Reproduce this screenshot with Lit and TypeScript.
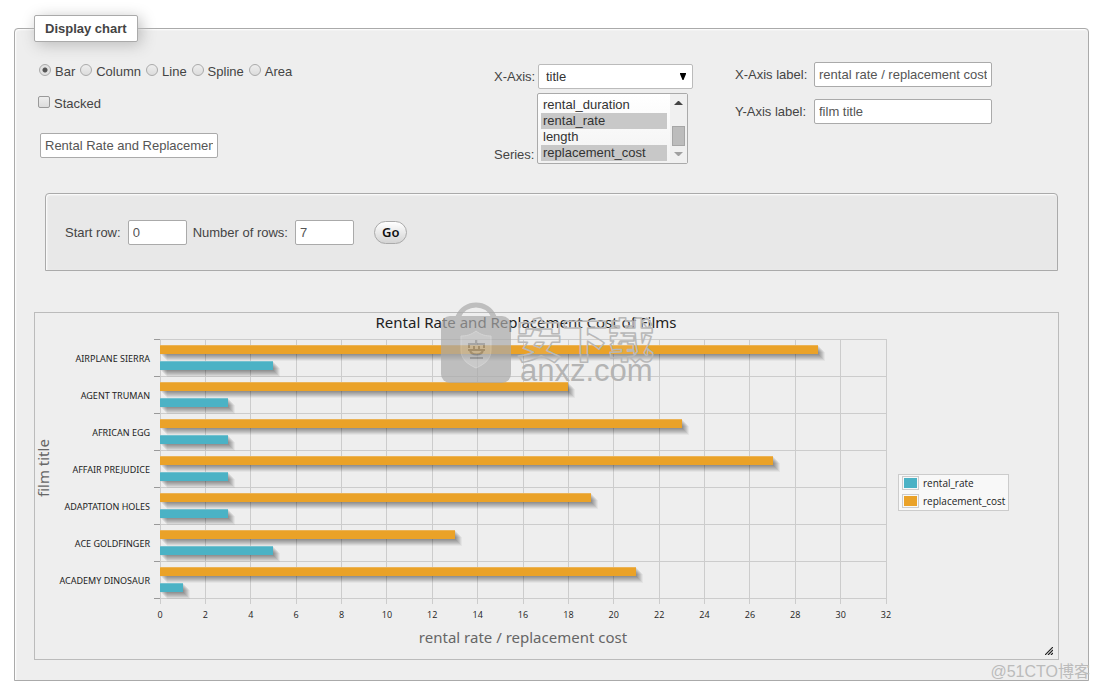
import { LitElement, html, svg, css } from "lit";
import { customElement, property } from "lit/decorators.js";
import { styleMap } from "lit/directives/style-map.js";

interface Film {
  title: string;
  rate: number;
  cost: number;
}

const FILMS: Film[] = [
  { title: "AIRPLANE SIERRA", rate: 5, cost: 29 },
  { title: "AGENT TRUMAN", rate: 3, cost: 18 },
  { title: "AFRICAN EGG", rate: 3, cost: 23 },
  { title: "AFFAIR PREJUDICE", rate: 3, cost: 27 },
  { title: "ADAPTATION HOLES", rate: 3, cost: 19 },
  { title: "ACE GOLDFINGER", rate: 5, cost: 13 },
  { title: "ACADEMY DINOSAUR", rate: 1, cost: 21 },
];
const MAX = 32;
const TICKS = Array.from({ length: MAX / 2 + 1 }, (_, i) => i * 2);

@customElement("film-chart")
export class FilmChart extends LitElement {
  @property({ attribute: false }) films: Film[] = [];

  static styles = css`
    :host {
      display: grid;
      grid-template-columns: 16px 99px 1fr 172px;
      grid-template-rows: 26px auto auto;
      position: relative;
      box-sizing: border-box;
      border: 1px solid #bbb;
      font-family: "Noto Sans", "Open Sans", sans-serif;
      color: #222;
      padding-bottom: 12px;
    }
    .title {
      grid-column: 3;
      grid-row: 1;
      font-size: 15px;
      line-height: 18px;
      text-align: center;
      white-space: nowrap;
      padding-left: 16px;
    }
    .ylabel {
      grid-column: 1;
      grid-row: 2;
      writing-mode: vertical-rl;
      transform: rotate(180deg);
      text-align: center;
      font-size: 15px;
      line-height: 16px;
      color: #666;
    }
    .cats {
      grid-column: 2;
      grid-row: 2;
      display: grid;
      grid-auto-rows: 37px;
      font-size: 9px;
      line-height: 40px;
      text-align: right;
      white-space: nowrap;
    }
    .plot {
      grid-column: 3;
      grid-row: 2;
      position: relative;
      margin: 0 0 0 10px;
    }
    .lines {
      position: absolute;
      inset: 0;
      width: 100%;
      height: 100%;
      overflow: visible;
      shape-rendering: crispEdges;
    }
    .row {
      position: relative;
      box-sizing: border-box;
      height: 37px;
      padding-top: 6px;
      display: grid;
      grid-template-rows: 9px 9px;
      row-gap: 7px;
    }
    .bar {
      box-shadow: 1px 1px rgba(0, 0, 0, 0.07), 2px 2px rgba(0, 0, 0, 0.07), 3px 3px rgba(0, 0, 0, 0.07),
        4px 4px rgba(0, 0, 0, 0.07), 5px 5px rgba(0, 0, 0, 0.07), 6px 6px rgba(0, 0, 0, 0.06),
        7px 7px rgba(0, 0, 0, 0.04);
    }
    .cost {
      background: linear-gradient(#ebb356 1px, #eaa228 1px);
    }
    .rate {
      background: linear-gradient(#74c1cf 1px, #4bb2c5 1px);
    }
    .axis {
      grid-column: 3;
      grid-row: 3;
      padding-left: 10px;
    }
    .ticks {
      display: flex;
      justify-content: space-between;
      padding-top: 10px;
      font-family: "Open Sans", "Noto Sans", sans-serif;
      font-size: 9px;
      line-height: 14px;
    }
    .tick {
      width: 0;
      display: flex;
      justify-content: center;
    }
    .xlabel {
      margin-top: 5px;
      font-size: 15px;
      line-height: 20px;
      text-align: center;
      color: #666;
    }
    .legend {
      grid-column: 4;
      grid-row: 2;
      align-self: center;
      justify-self: start;
      box-sizing: border-box;
      margin: 48px 0 0 12px;
      border: 1px solid #ccc;
      background: rgba(255, 255, 255, 0.6);
      padding: 1px 3px 2px;
      display: grid;
      row-gap: 4px;
      font-family: "Open Sans", "Noto Sans", sans-serif;
      font-size: 10px;
      line-height: 14px;
    }
    .entry {
      display: flex;
      align-items: center;
      gap: 4px;
    }
    .swatch {
      box-sizing: border-box;
      width: 17px;
      height: 14px;
      border: 1px solid #ccc;
      padding: 1px;
      background-clip: content-box;
      background-color: var(--tone);
    }
    .teal {
      --tone: #4bb2c5;
    }
    .amber {
      --tone: #eaa228;
    }
    .grip {
      position: absolute;
      right: 5px;
      bottom: 4px;
    }
  `;

  render() {
    const n = this.films.length;
    return html`
      <div class="title">Rental Rate and Replacement Cost of Films</div>
      <div class="ylabel">film title</div>
      <div class="cats">${this.films.map((f) => html`<div>${f.title}</div>`)}</div>
      <div class="plot">
        <svg class="lines" aria-hidden="true">
          ${TICKS.map((t) => {
            const x = `${(t / MAX) * 100}%`;
            return svg`<line x1=${x} x2=${x} y1="0" y2="100%" stroke="#ccc"></line>
              <svg x=${x} y="100%" overflow="visible"><line y2="6" stroke="#ccc"></line></svg>`;
          })}
          ${Array.from({ length: n + 1 }, (_, i) => {
            const y = `${(i / n) * 100}%`;
            return svg`<line x1="0" x2="100%" y1=${y} y2=${y} stroke="#ccc"></line>
              <line x1="-6" x2="0" y1=${y} y2=${y} stroke="#999"></line>`;
          })}
        </svg>
        ${this.films.map(
          (f) => html`<div class="row">
            <div class="bar cost" style=${styleMap({ width: `${(f.cost / MAX) * 100}%` })}></div>
            <div class="bar rate" style=${styleMap({ width: `${(f.rate / MAX) * 100}%` })}></div>
          </div>`
        )}
      </div>
      <div class="axis">
        <div class="ticks">${TICKS.map((t) => html`<span class="tick">${t}</span>`)}</div>
        <div class="xlabel">rental rate / replacement cost</div>
      </div>
      <div class="legend">
        <div class="entry"><span class="swatch teal"></span>rental_rate</div>
        <div class="entry"><span class="swatch amber"></span>replacement_cost</div>
      </div>
      <svg class="grip" width="8" height="8" viewBox="0 0 8 8" aria-hidden="true">
        <path d="M0 8L8 0M3 8L8 3M6 8L8 6" stroke="#222" stroke-width="1.2" fill="none" />
      </svg>
    `;
  }
}

@customElement("app-root")
export class AppRoot extends LitElement {
  static styles = css`
    :host {
      display: block;
      position: relative;
      min-height: 100vh;
      box-sizing: border-box;
      padding: 15px 10px 9px 14px;
      background: #fff;
      font-family: "Liberation Sans", Arial, sans-serif;
      font-size: 13px;
      line-height: 16px;
      color: #444;
    }
    .panel {
      margin: 0;
      min-width: 0;
      border: 1px solid #aaa;
      border-radius: 4px 4px 0 0;
      background: #eee;
      box-shadow: inset 1px 1px 2px #fff;
      padding: 20px 29px 20px 19px;
    }
    .legend {
      box-sizing: border-box;
      height: 27px;
      padding: 5px 10px;
      border: 1px solid #aaa;
      border-radius: 2px;
      background: #fff;
      box-shadow: 3px 3px 15px #bbb;
      font-weight: bold;
      line-height: 15px;
    }
    .settings {
      display: grid;
      grid-template-columns: 460fr 241fr 324fr;
      align-items: start;
      white-space: nowrap;
    }
    .kinds {
      display: flex;
      gap: 5px;
      padding: 2px 0 0 5px;
    }
    .choice {
      display: flex;
      align-items: center;
      gap: 4px;
    }
    .stack {
      padding: 16px 0 21px 4px;
    }
    .radio,
    .check {
      appearance: none;
      box-sizing: border-box;
      width: 12px;
      height: 12px;
      margin: 0 0 4px;
      border: 1px solid #aaa;
      background: linear-gradient(#eee, #dcdcdc);
    }
    .radio {
      border-radius: 50%;
    }
    .check {
      border-radius: 2px;
      border-color: #999;
    }
    .radio:checked {
      background: radial-gradient(circle, #555 0 2px, #e2e2e2 3px);
    }
    .text {
      box-sizing: border-box;
      width: 178px;
      height: 25px;
      margin: 0;
      padding: 4px;
      border: 1px solid #aaa;
      border-radius: 2px;
      background: #fff;
      font: inherit;
      color: #555;
    }
    .name {
      display: block;
      margin-left: 6px;
    }
    .short {
      width: 59px;
    }
    .axes {
      display: grid;
      grid-template-columns: 41px auto;
      justify-content: start;
      column-gap: 2px;
      row-gap: 4px;
      padding-top: 2px;
    }
    .mid {
      align-self: center;
    }
    .low {
      align-self: end;
      padding-bottom: 1px;
    }
    .pick {
      appearance: none;
      box-sizing: border-box;
      width: 155px;
      height: 25px;
      margin: 0 0 0 1px;
      padding: 0 7px;
      border: 1px solid #bbb;
      border-radius: 2px;
      font: inherit;
      color: #333;
      background: #fff
        url("data:image/svg+xml,%3Csvg xmlns='http://www.w3.org/2000/svg' width='6' height='7'%3E%3Cpath d='M0 0h6v1L3.5 7h-1L0 1z'/%3E%3C/svg%3E")
        no-repeat right 6px top 8px;
    }
    .box {
      box-sizing: border-box;
      display: flex;
      justify-content: space-between;
      width: 151px;
      height: 71px;
      border: 1px solid #aaa;
      border-radius: 2px;
      background: linear-gradient(#fff, #f2f2f2);
    }
    .list {
      appearance: none;
      box-sizing: border-box;
      width: 126px;
      height: 64px;
      margin: 3px 0 0 3px;
      padding: 0;
      border: 0;
      border-radius: 0;
      outline: none;
      background: transparent;
      font: inherit;
      color: #333;
      overflow-x: hidden;
      overflow-y: scroll;
      scrollbar-width: none;
    }
    .list option {
      box-sizing: border-box;
      min-height: 16px;
      height: 16px;
      padding: 0 2px;
      line-height: 16px;
    }
    .list option:checked {
      background: #c8c8c8 linear-gradient(#c8c8c8, #c8c8c8);
      color: #333;
    }
    .labels {
      display: grid;
      grid-template-columns: 79px auto;
      justify-content: start;
      align-items: center;
      row-gap: 12px;
    }
    .rows {
      display: flex;
      align-items: center;
      margin: 29px 1px 0 11px;
      padding: 26px 19px 25px;
      border: 1px solid #aaa;
      border-radius: 4px 4px 0 0;
      background: #e8e8e8;
      box-shadow: inset 1px 1px 2px #fff;
    }
    .field {
      display: flex;
      align-items: center;
      gap: 7px;
      margin-right: 6px;
    }
    .go {
      box-sizing: border-box;
      height: 23px;
      margin: 0 0 0 14px;
      padding: 0 7px;
      border: 1px solid #aaa;
      border-radius: 12px;
      background: linear-gradient(#fff, #d4d4d4);
      font: 600 13px/19px "Noto Sans", "Open Sans", sans-serif;
      color: #111;
    }
    .chart {
      position: relative;
      margin-top: 41px;
    }
    .brand {
      position: absolute;
      left: 406px;
      top: -10px;
      pointer-events: none;
    }
    .credit {
      position: absolute;
      right: 9px;
      bottom: 6px;
      font-family: "Liberation Sans", "Noto Sans CJK SC", sans-serif;
      font-size: 16px;
      line-height: 24px;
      color: #bbb;
      pointer-events: none;
    }
  `;

  firstUpdated() {
    const list = this.renderRoot.querySelector<HTMLSelectElement>("#series")!;
    const toEnd = () => (list.scrollTop = list.scrollHeight);
    toEnd();
    requestAnimationFrame(() => requestAnimationFrame(toEnd));
  }

  render() {
    return html`
      <fieldset class="panel">
        <legend class="legend">Display chart</legend>
        <div class="settings">
          <div>
            <div class="kinds">
              ${["Bar", "Column", "Line", "Spline", "Area"].map(
                (k) => html`<label class="choice"
                  ><input class="radio" type="radio" name="kind" ?checked=${k === "Bar"} />${k}</label
                >`
              )}
            </div>
            <div class="stack">
              <label class="choice"><input class="check" type="checkbox" />Stacked</label>
            </div>
            <input class="text name" aria-label="Chart title" value="Rental Rate and Replacement Cost of Films" />
          </div>
          <div class="axes">
            <label class="mid" for="xaxis">X-Axis:</label>
            <select class="pick" id="xaxis">
              <option>title</option>
            </select>
            <label class="low" for="series">Series:</label>
            <div class="box">
              <select class="list" id="series" multiple size="4">
                <option>film_id</option>
                <option>release_year</option>
                <option>language_id</option>
                <option>rental_duration</option>
                <option selected>rental_rate</option>
                <option>length</option>
                <option selected>replacement_cost</option>
              </select>
              <svg width="17" height="69" viewBox="0 0 17 69" aria-hidden="true">
                <rect width="17" height="69" fill="#f0f0f0" />
                <path d="M4 11L8 7H9L13 11Z" fill="#444" />
                <rect x="2.500" y="32.500" width="12" height="19" fill="#bcbcbc" stroke="#a6a6a6" />
                <path d="M4 58L8 62H9L13 58Z" fill="#a0a0a0" />
              </svg>
            </div>
          </div>
          <div class="labels">
            <label for="xlabel">X-Axis label:</label>
            <input class="text" id="xlabel" value="rental rate / replacement cost" />
            <label for="ylabel">Y-Axis label:</label>
            <input class="text" id="ylabel" value="film title" />
          </div>
        </div>
        <div class="rows">
          <label class="field">Start row:<input class="text short" value="0" /></label>
          <label class="field">Number of rows:<input class="text short" value="7" /></label>
          <button class="go" type="button">Go</button>
        </div>
        <div class="chart">
          <film-chart .films=${FILMS}></film-chart>
          <svg class="brand" width="216" height="92" viewBox="0 0 216 92" aria-hidden="true">
            <g opacity="0.7">
              <path d="M18 15C24 -1 48 -1 54 15" fill="none" stroke="#aaa" stroke-width="5" />
              <rect x="1" y="14" width="70" height="67" rx="9" fill="#aaa" />
              <path d="M36 29C41 33 46 34 51 34V48C51 57 45 62 36 66C27 62 21 57 21 48V34C26 34 31 33 36 29Z" fill="#bcbcbc" stroke="#cacaca" />
              <path
                d="M36 38V42M29 46V42H44V46M28 48H45M30 48C31 54 42 54 43 48M34 44V48M39 44V48M30 56H43"
                fill="none"
                stroke="#888"
                stroke-width="2"
              />
            </g>
            <text
              x="76"
              y="55"
              font-family="Noto Sans CJK SC, sans-serif"
              font-weight="900"
              font-size="46"
              fill="#eee"
              fill-opacity="0.1"
              stroke="#b8b8b8"
              stroke-width="1.500"
              stroke-linejoin="round"
            >安下载</text>
            <text x="80" y="79" font-family="Liberation Sans, sans-serif" font-size="31" fill="#b4b4b4">anxz.com</text>
          </svg>
        </div>
      </fieldset>
      <div class="credit">@51CTO博客</div>
    `;
  }
}
